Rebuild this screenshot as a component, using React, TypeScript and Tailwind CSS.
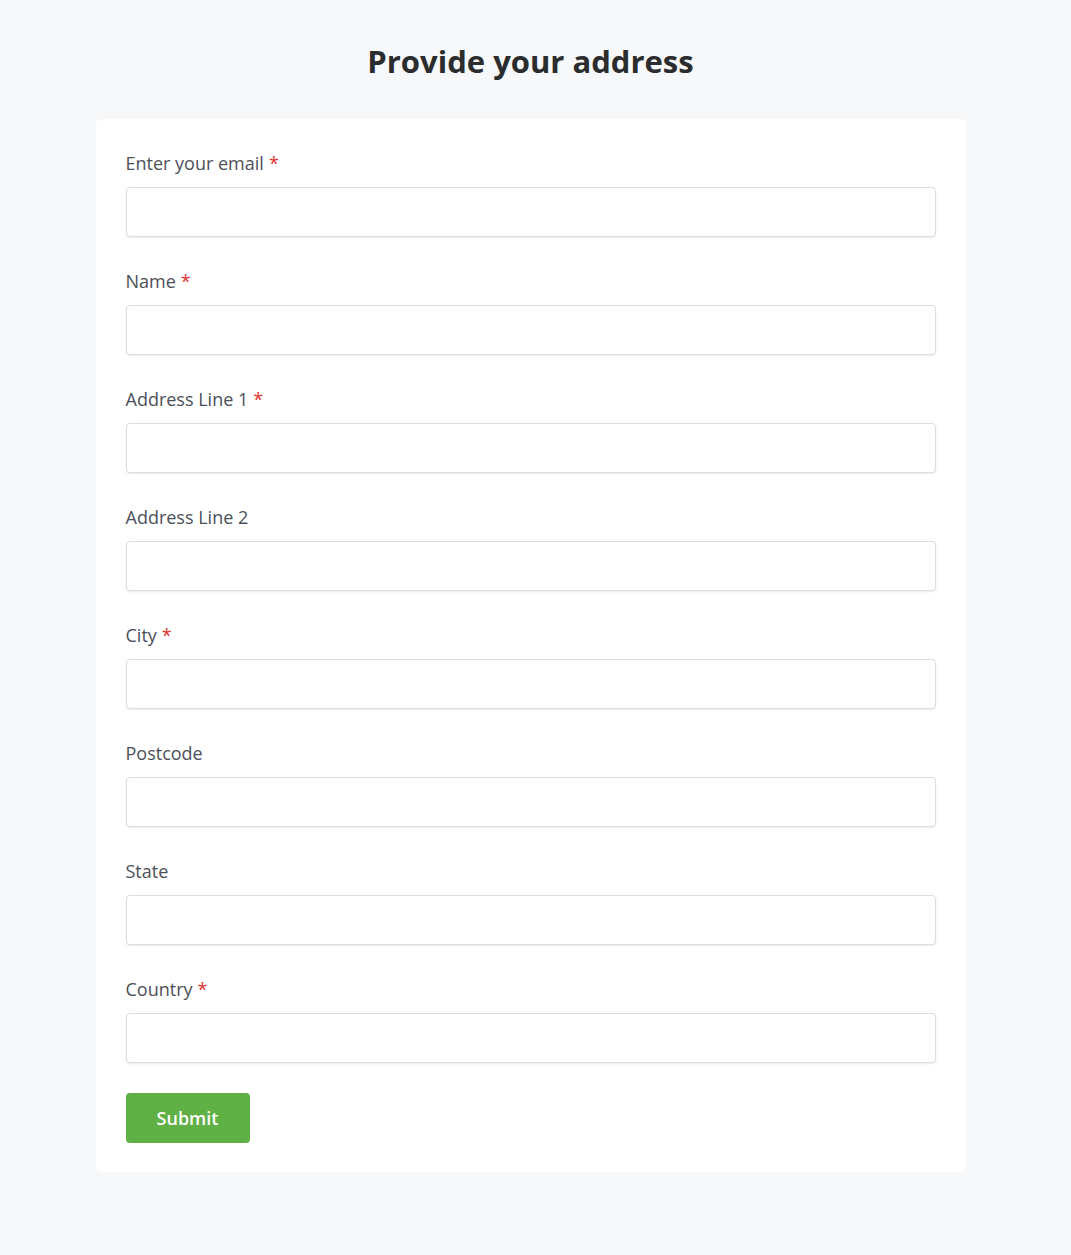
import React from 'react';

const fields = [
  { label: 'Enter your email', required: true, type: 'email' },
  { label: 'Name', required: true, type: 'text' },
  { label: 'Address Line 1', required: true, type: 'text' },
  { label: 'Address Line 2', required: false, type: 'text' },
  { label: 'City', required: true, type: 'text' },
  { label: 'Postcode', required: false, type: 'text' },
  { label: 'State', required: false, type: 'text' },
  { label: 'Country', required: true, type: 'text' },
];

export default function App() {
  return (
    <div
      className="min-h-screen bg-[#f7f8fa] pr-[10px]"
      style={{ fontFamily: '"Open Sans", "Noto Sans", sans-serif' }}
    >
      <div className="w-[870px] mx-auto pt-[41px] pb-[83px]">
        <h1 className="text-center text-[31px] leading-[40px] font-bold text-[#2b2c2e] mb-[38px]">
          Provide your address
        </h1>

        <form className="bg-white rounded-md px-[30px] pt-[30px] pb-[29px]">
          {fields.map((f) => (
            <div key={f.label} className="mb-[30px]">
              <label className="block text-[18px] leading-[28px] text-[#4b5059] mb-[10px]">
                {f.label}
                {f.required && <span className="text-[#e0332f] ml-[5px]">*</span>}
              </label>
              <input
                type={f.type}
                className="block w-full h-[50px] rounded border border-[#dcdde2] bg-white shadow-[0_1px_2px_rgba(0,0,0,0.08)] px-3 outline-none"
              />
            </div>
          ))}

          <button
            type="button"
            className="w-[124px] h-[50px] rounded bg-[#5fb045] text-white text-[18px] font-semibold"
          >
            Submit
          </button>
        </form>
      </div>
    </div>
  );
}
